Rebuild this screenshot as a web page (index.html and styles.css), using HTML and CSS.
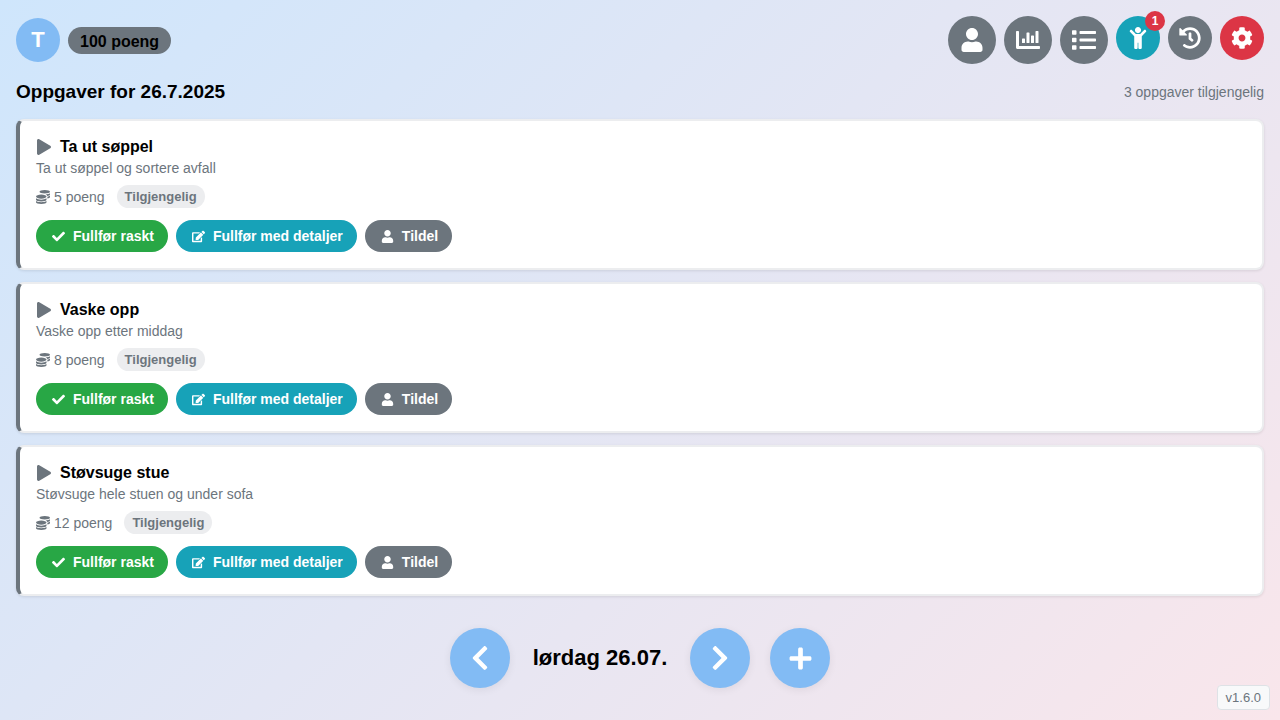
FILE: index.html
```html
<!DOCTYPE html>
<html lang="no">
<head>
<meta charset="utf-8">
<meta name="viewport" content="width=device-width, initial-scale=1">
<title>Oppgaver</title>
<link rel="stylesheet" href="styles.css">
</head>
<body>
<svg class="sprite" aria-hidden="true">
  <symbol id="user" viewBox="0 0 448 512"><path d="M224 256c70.7 0 128-57.3 128-128S294.7 0 224 0 96 57.3 96 128s57.3 128 128 128zm89.6 32h-16.7c-22.2 10.2-46.9 16-72.9 16s-50.6-5.8-72.9-16h-16.7C60.2 288 0 348.2 0 422.4V464c0 26.5 21.5 48 48 48h352c26.5 0 48-21.5 48-48v-41.6c0-74.2-60.2-134.4-134.4-134.4z"/></symbol>
  <symbol id="chart" viewBox="0 0 512 512"><path d="M332.8 320h38.4c6.4 0 12.8-6.4 12.8-12.8V172.8c0-6.4-6.4-12.8-12.8-12.8h-38.4c-6.4 0-12.8 6.4-12.8 12.8v134.4c0 6.4 6.4 12.8 12.8 12.8zm96 0h38.4c6.4 0 12.8-6.4 12.8-12.8V76.8c0-6.4-6.4-12.8-12.8-12.8h-38.4c-6.4 0-12.8 6.4-12.8 12.8v230.4c0 6.4 6.4 12.8 12.8 12.8zm-288 0h38.4c6.4 0 12.8-6.4 12.8-12.8v-70.4c0-6.4-6.4-12.8-12.8-12.8h-38.4c-6.4 0-12.8 6.4-12.8 12.8v70.4c0 6.4 6.4 12.8 12.8 12.8zm96 0h38.4c6.4 0 12.8-6.4 12.8-12.8V108.8c0-6.4-6.4-12.8-12.8-12.8h-38.4c-6.4 0-12.8 6.4-12.8 12.8v198.4c0 6.4 6.4 12.8 12.8 12.8zM496 384H64V80c0-8.84-7.16-16-16-16H16C7.16 64 0 71.16 0 80v336c0 17.67 14.33 32 32 32h464c8.84 0 16-7.16 16-16v-32c0-8.84-7.16-16-16-16z"/></symbol>
  <symbol id="list" viewBox="0 0 512 512"><path d="M80 368H16a16 16 0 0 0-16 16v64a16 16 0 0 0 16 16h64a16 16 0 0 0 16-16v-64a16 16 0 0 0-16-16zm0-320H16A16 16 0 0 0 0 64v64a16 16 0 0 0 16 16h64a16 16 0 0 0 16-16V64a16 16 0 0 0-16-16zm0 160H16a16 16 0 0 0-16 16v64a16 16 0 0 0 16 16h64a16 16 0 0 0 16-16v-64a16 16 0 0 0-16-16zm416 176H176a16 16 0 0 0-16 16v32a16 16 0 0 0 16 16h320a16 16 0 0 0 16-16v-32a16 16 0 0 0-16-16zm0-320H176a16 16 0 0 0-16 16v32a16 16 0 0 0 16 16h320a16 16 0 0 0 16-16V80a16 16 0 0 0-16-16zm0 160H176a16 16 0 0 0-16 16v32a16 16 0 0 0 16 16h320a16 16 0 0 0 16-16v-32a16 16 0 0 0-16-16z"/></symbol>
  <symbol id="child" viewBox="0 0 384 512"><path d="M120 72c0-39.765 32.235-72 72-72s72 32.235 72 72c0 39.764-32.235 72-72 72s-72-32.236-72-72zm254.627 1.373c-12.496-12.497-32.758-12.497-45.254 0L242.745 160H141.254L54.627 73.373c-12.496-12.497-32.758-12.497-45.254 0-12.497 12.497-12.497 32.758 0 45.255L104 213.254V480c0 17.673 14.327 32 32 32h16c17.673 0 32-14.327 32-32V368h16v112c0 17.673 14.327 32 32 32h16c17.673 0 32-14.327 32-32V213.254l94.627-94.627c12.497-12.497 12.497-32.757 0-45.254z"/></symbol>
  <symbol id="history" viewBox="0 0 512 512"><path d="M504 255.531c.253 136.64-111.18 248.372-247.82 248.468-59.015.042-113.223-20.53-155.822-54.911-11.077-8.94-11.905-25.541-1.839-35.607l11.267-11.267c8.609-8.609 22.353-9.551 31.891-1.984C173.062 425.135 212.781 440 256 440c101.705 0 184-82.311 184-184 0-101.705-82.311-184-184-184-48.814 0-93.149 18.969-126.068 49.932l50.754 50.754c10.08 10.08 2.941 27.314-11.313 27.314H24c-8.837 0-16-7.163-16-16V38.627c0-14.254 17.234-21.393 27.314-11.314l49.372 49.372C129.209 34.136 189.552 8 256 8c136.81 0 247.747 110.78 248 247.531zm-180.912 78.784l9.823-12.63c8.138-10.463 6.253-25.542-4.21-33.679L288 256.349V152c0-13.255-10.745-24-24-24h-16c-13.255 0-24 10.745-24 24v135.651l65.409 50.874c10.463 8.137 25.541 6.253 33.679-4.21z"/></symbol>
  <symbol id="cog" viewBox="0 0 512 512"><path d="M487.4 315.7l-42.6-24.6c4.3-23.2 4.3-47 0-70.2l42.6-24.6c4.9-2.8 7.1-8.6 5.5-14-11.1-35.6-30-67.8-54.7-94.6-3.8-4.1-10-5.1-14.8-2.3L380.8 110c-17.9-15.4-38.5-27.3-60.8-35.1V25.8c0-5.6-3.9-10.5-9.4-11.7-36.7-8.2-74.3-7.8-109.2 0-5.5 1.2-9.4 6.1-9.4 11.7V75c-22.2 7.9-42.8 19.8-60.8 35.1L88.7 85.5c-4.9-2.8-11-1.9-14.8 2.3-24.7 26.7-43.6 58.9-54.7 94.6-1.7 5.4.6 11.2 5.5 14L67.3 221c-4.3 23.2-4.3 47 0 70.2l-42.6 24.6c-4.9 2.8-7.1 8.6-5.5 14 11.1 35.6 30 67.8 54.7 94.6 3.8 4.1 10 5.1 14.8 2.3l42.6-24.6c17.9 15.4 38.5 27.3 60.8 35.1v49.2c0 5.6 3.9 10.5 9.4 11.7 36.7 8.2 74.3 7.8 109.2 0 5.5-1.2 9.4-6.1 9.4-11.7v-49.2c22.2-7.9 42.8-19.8 60.8-35.1l42.6 24.6c4.9 2.8 11 1.9 14.8-2.3 24.7-26.7 43.6-58.9 54.7-94.6 1.5-5.5-.7-11.3-5.6-14.1zM256 336c-44.1 0-80-35.9-80-80s35.9-80 80-80 80 35.9 80 80-35.9 80-80 80z"/></symbol>
  <symbol id="play" viewBox="0 0 448 512"><path d="M424.4 214.7L72.4 6.6C43.8-10.3 0 6.1 0 47.9V464c0 37.5 40.7 60.1 72.4 41.3l352-208c31.4-18.5 31.5-64.1 0-82.6z"/></symbol>
  <symbol id="check" viewBox="0 0 512 512"><path d="M173.898 439.404l-166.4-166.4c-9.997-9.997-9.997-26.206 0-36.204l36.203-36.204c9.997-9.998 26.207-9.998 36.204 0L192 312.69 432.095 72.596c9.997-9.997 26.207-9.997 36.204 0l36.203 36.204c9.997 9.997 9.997 26.206 0 36.204l-294.4 294.401c-9.998 9.997-26.207 9.997-36.204-.001z"/></symbol>
  <symbol id="edit" viewBox="0 0 576 512"><path d="M402.6 83.2l90.2 90.2c3.8 3.8 3.8 10 0 13.8L274.4 405.6l-92.8 10.3c-12.4 1.4-22.9-9.1-21.5-21.5l10.3-92.8L388.8 83.2c3.8-3.8 10-3.8 13.8 0zm162-22.9l-48.8-48.8c-15.2-15.2-39.9-15.2-55.2 0l-35.4 35.4c-3.8 3.8-3.8 10 0 13.8l90.2 90.2c3.8 3.8 10 3.8 13.8 0l35.4-35.4c15.2-15.3 15.2-40 0-55.2zM384 346.2V448H64V128h229.8c3.2 0 6.2-1.3 8.5-3.5l40-40c7.6-7.6 2.2-20.5-8.5-20.5H48C21.5 64 0 85.5 0 112v352c0 26.5 21.5 48 48 48h352c26.5 0 48-21.5 48-48V306.2c0-10.7-12.9-16-20.5-8.5l-40 40c-2.2 2.3-3.5 5.3-3.5 8.5z"/></symbol>
  <symbol id="coins" viewBox="0 0 512 512"><path d="M0 405.3V448c0 35.3 86 64 192 64s192-28.7 192-64v-42.7C342.7 434.4 267.2 448 192 448S41.3 434.4 0 405.3zM320 128c106 0 192-28.7 192-64S426 0 320 0 128 28.7 128 64s86 64 192 64zM0 300.4V352c0 35.3 86 64 192 64s192-28.7 192-64v-51.6c-41.3 34-116.9 51.6-192 51.6S41.3 334.4 0 300.4zm416 11c57.3-11.1 96-31.7 96-55.4v-42.7c-23.2 16.4-57.3 27.6-96 34.5v63.6zM192 160C86 160 0 195.8 0 240s86 80 192 80 192-35.8 192-80-86-80-192-80zm219.3 56.3c60-10.8 100.7-32 100.7-56.3v-42.7c-35.5 25.1-96.5 38.6-160.7 41.8 29.5 14.3 51.2 33.5 60 57.2z"/></symbol>
  <symbol id="left" viewBox="0 0 320 512"><path d="M34.52 239.03L228.87 44.69c9.37-9.37 24.57-9.37 33.94 0l22.67 22.67c9.36 9.36 9.37 24.52.04 33.9L131.49 256l154.02 154.75c9.34 9.38 9.32 24.54-.04 33.9l-22.67 22.67c-9.37 9.37-24.57 9.37-33.94 0L34.52 272.97c-9.37-9.37-9.37-24.57 0-33.94z"/></symbol>
  <symbol id="right" viewBox="0 0 320 512"><path d="M285.476 272.971L91.132 467.314c-9.373 9.373-24.569 9.373-33.941 0l-22.667-22.667c-9.357-9.357-9.375-24.522-.04-33.901L188.505 256 34.484 101.255c-9.335-9.379-9.317-24.544.04-33.901l22.667-22.667c9.373-9.373 24.569-9.373 33.941 0L285.475 239.03c9.373 9.372 9.373 24.568.001 33.941z"/></symbol>
  <symbol id="plus" viewBox="0 0 448 512"><path d="M416 208H272V64c0-17.67-14.33-32-32-32h-32c-17.67 0-32 14.33-32 32v144H32c-17.67 0-32 14.33-32 32v32c0 17.67 14.33 32 32 32h144v144c0 17.67 14.33 32 32 32h32c17.67 0 32-14.33 32-32V304h144c17.67 0 32-14.33 32-32v-32c0-17.67-14.33-32-32-32z"/></symbol>
</svg>

<header class="topbar">
  <div class="profile">
    <span class="avatar">T</span>
    <span class="points">100 poeng</span>
  </div>
  <nav class="tools" aria-label="Verktøy">
    <button class="tool tool-large" type="button" aria-label="Bruker"><svg class="icon-24"><use href="#user"/></svg></button>
    <button class="tool tool-large" type="button" aria-label="Statistikk"><svg class="icon-24"><use href="#chart"/></svg></button>
    <button class="tool tool-large" type="button" aria-label="Oppgaveliste"><svg class="icon-24"><use href="#list"/></svg></button>
    <button class="tool tool-info" type="button" aria-label="Barn"><svg class="icon-22"><use href="#child"/></svg><span class="count">1</span></button>
    <button class="tool" type="button" aria-label="Historikk"><svg class="icon-22"><use href="#history"/></svg></button>
    <button class="tool tool-danger" type="button" aria-label="Innstillinger"><svg class="icon-22"><use href="#cog"/></svg></button>
  </nav>
</header>

<main class="content">
  <div class="heading">
    <h1 class="heading-title">Oppgaver for 26.7.2025</h1>
    <span class="heading-count">3 oppgaver tilgjengelig</span>
  </div>

  <article class="card">
    <h2 class="card-title"><svg class="icon-16"><use href="#play"/></svg>Ta ut søppel</h2>
    <p class="card-text">Ta ut søppel og sortere avfall</p>
    <div class="meta"><span class="meta-points"><svg class="icon-14"><use href="#coins"/></svg>5 poeng</span><span class="status">Tilgjengelig</span></div>
    <div class="actions">
      <button class="action action-success" type="button"><svg class="icon-13"><use href="#check"/></svg>Fullfør raskt</button>
      <button class="action action-info" type="button"><svg class="icon-13"><use href="#edit"/></svg>Fullfør med detaljer</button>
      <button class="action" type="button"><svg class="icon-13"><use href="#user"/></svg>Tildel</button>
    </div>
  </article>

  <article class="card">
    <h2 class="card-title"><svg class="icon-16"><use href="#play"/></svg>Vaske opp</h2>
    <p class="card-text">Vaske opp etter middag</p>
    <div class="meta"><span class="meta-points"><svg class="icon-14"><use href="#coins"/></svg>8 poeng</span><span class="status">Tilgjengelig</span></div>
    <div class="actions">
      <button class="action action-success" type="button"><svg class="icon-13"><use href="#check"/></svg>Fullfør raskt</button>
      <button class="action action-info" type="button"><svg class="icon-13"><use href="#edit"/></svg>Fullfør med detaljer</button>
      <button class="action" type="button"><svg class="icon-13"><use href="#user"/></svg>Tildel</button>
    </div>
  </article>

  <article class="card">
    <h2 class="card-title"><svg class="icon-16"><use href="#play"/></svg>Støvsuge stue</h2>
    <p class="card-text">Støvsuge hele stuen og under sofa</p>
    <div class="meta"><span class="meta-points"><svg class="icon-14"><use href="#coins"/></svg>12 poeng</span><span class="status">Tilgjengelig</span></div>
    <div class="actions">
      <button class="action action-success" type="button"><svg class="icon-13"><use href="#check"/></svg>Fullfør raskt</button>
      <button class="action action-info" type="button"><svg class="icon-13"><use href="#edit"/></svg>Fullfør med detaljer</button>
      <button class="action" type="button"><svg class="icon-13"><use href="#user"/></svg>Tildel</button>
    </div>
  </article>
</main>

<footer class="daybar">
  <button class="day-button" type="button" aria-label="Forrige dag"><svg class="icon-28"><use href="#left"/></svg></button>
  <span class="day-label">lørdag 26.07.</span>
  <button class="day-button" type="button" aria-label="Neste dag"><svg class="icon-28"><use href="#right"/></svg></button>
  <button class="day-button" type="button" aria-label="Legg til oppgave"><svg class="icon-25"><use href="#plus"/></svg></button>
</footer>
<div class="version">v1.6.0</div>
</body>
</html>
```
FILE: styles.css
```css
* { box-sizing: border-box; }

body {
  margin: 0;
  min-height: 100vh;
  display: flex;
  flex-direction: column;
  background: linear-gradient(135deg, #cfe6fc 0%, #e8e6f2 60%, #f9e6eb 100%);
  color: #000;
  font-family: "Liberation Sans", Arial, sans-serif;
}

button {
  border: 0;
  padding: 0;
  font: inherit;
  color: #fff;
  cursor: pointer;
}

svg { fill: currentColor; flex: none; }
.sprite { position: absolute; width: 0; height: 0; }
.icon-13 { width: 13px; height: 13px; }
.icon-14 { width: 14px; height: 14px; }
.icon-16 { width: 16px; height: 16px; }
.icon-22 { width: 22px; height: 22px; }
.icon-24 { width: 24px; height: 24px; }
.icon-25 { width: 25px; height: 25px; }
.icon-28 { width: 28px; height: 28px; }

.topbar {
  display: flex;
  justify-content: space-between;
  align-items: center;
  padding: 16px 16px 0;
}
.profile { display: flex; align-items: center; gap: 8px; }
.avatar {
  display: grid;
  place-items: center;
  width: 44px;
  height: 44px;
  border-radius: 50%;
  background: #82bbf4;
  color: #fff;
  font-size: 22px;
  font-weight: 700;
}
.points {
  padding: 5px 12px 3px;
  border-radius: 14px;
  background: #6c757d;
  font-size: 16px;
  line-height: 19px;
  font-weight: 700;
}
.tools { display: flex; align-items: flex-start; gap: 8px; }
.tool {
  position: relative;
  display: grid;
  place-items: center;
  width: 44px;
  height: 44px;
  border-radius: 50%;
  background: #6c757d;
}
.tool-large { width: 48px; height: 48px; }
.tool-info { background: #17a2b8; }
.tool-danger { background: #dc3545; }
.count {
  position: absolute;
  top: -5px;
  right: -5px;
  width: 20px;
  height: 20px;
  border-radius: 50%;
  background: #dc3545;
  font-size: 12px;
  line-height: 20px;
  font-weight: 700;
}

.content {
  display: flex;
  flex-direction: column;
  gap: 12px;
  padding: 16px 16px 0;
}
.heading {
  display: flex;
  justify-content: space-between;
  align-items: center;
  padding-bottom: 4px;
}
.heading-title { margin: 0; font-size: 19px; line-height: 23px; font-weight: 700; }
.heading-count { color: #6c757d; font-size: 14px; }

.card {
  border: 2px solid #ecedef;
  border-left: 4px solid #6c757d;
  border-radius: 8px;
  padding: 16px;
  background: #fff;
  box-shadow: 0 1px 3px rgba(0, 0, 0, 0.1);
}
.card-title {
  display: flex;
  align-items: center;
  gap: 8px;
  margin: 0 0 4px;
  font-size: 16px;
  line-height: 19px;
  font-weight: 700;
}
.card-title svg { color: #6c757d; }
.card-text { margin: 0 0 8px; color: #6c757d; font-size: 14px; line-height: 17px; }
.meta { display: flex; align-items: center; gap: 12px; margin-bottom: 12px; }
.meta-points { display: flex; align-items: center; gap: 4px; color: #6c757d; font-size: 14px; }
.status {
  padding: 4px 8px;
  border-radius: 12px;
  background: #ecedef;
  color: #6c757d;
  font-size: 13px;
  line-height: 15px;
  font-weight: 700;
}
.actions { display: flex; flex-wrap: wrap; gap: 8px; }
.action {
  display: flex;
  align-items: center;
  gap: 8px;
  padding: 8px 14px 8px 16px;
  border-radius: 16px;
  background: #6c757d;
  font-size: 14px;
  line-height: 16px;
  font-weight: 700;
}
.action-success { background: #28a745; }
.action-info { background: #17a2b8; }

.daybar {
  display: flex;
  justify-content: center;
  align-items: center;
  gap: 20px;
  padding: 32px 16px;
}
.day-button {
  display: grid;
  place-items: center;
  width: 60px;
  height: 60px;
  border-radius: 50%;
  background: #82bbf4;
  box-shadow: 0 2px 8px rgba(0, 0, 0, 0.07);
}
.day-label { min-width: 140px; text-align: center; font-size: 22px; font-weight: 700; }

.version {
  position: fixed;
  right: 10px;
  bottom: 10px;
  padding: 4px 8px;
  border: 1px solid #dee2e6;
  border-radius: 4px;
  background: #f8f9fa;
  color: #6c757d;
  font-size: 13px;
  line-height: 15px;
}
```
